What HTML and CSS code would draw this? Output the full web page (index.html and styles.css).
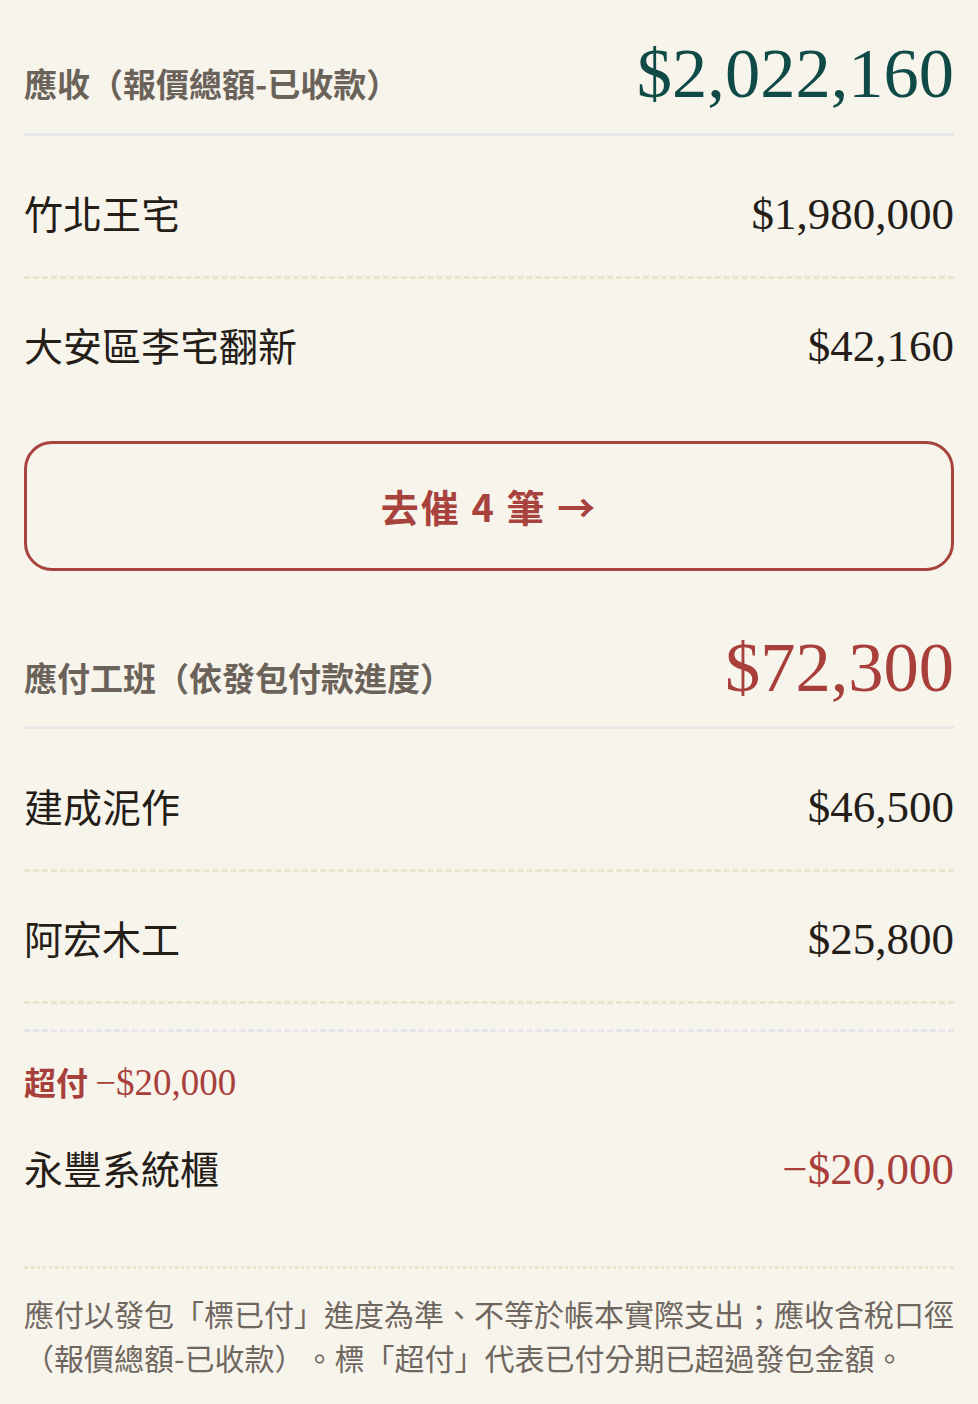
FILE: index.html
```html
<!DOCTYPE html>
<html lang="zh-Hant">
  <head>
    <meta charset="UTF-8" />
    <title>應收應付摘要</title>
    <link rel="stylesheet" href="styles.css">
  </head>
  <body>
    <main class="summary">
      <!-- 應收：依案場列出 -->
      <section class="block">
        <div class="block-head">
          <h2 class="block-title">應收（報價總額-已收款）</h2>
          <span class="block-total total-in">$2,022,160</span>
        </div>
        <ul class="rows">
          <li class="row">
            <span class="row-name">竹北王宅</span>
            <span class="row-amt">$1,980,000</span>
          </li>
          <li class="row is-last">
            <span class="row-name">大安區李宅翻新</span>
            <span class="row-amt">$42,160</span>
          </li>
        </ul>
        <button class="chase-btn" type="button">去催 4 筆 →</button>
      </section>

      <!-- 應付：依工班列出 -->
      <section class="block">
        <div class="block-head">
          <h2 class="block-title">應付工班（依發包付款進度）</h2>
          <span class="block-total total-out">$72,300</span>
        </div>
        <ul class="rows">
          <li class="row">
            <span class="row-name">建成泥作</span>
            <span class="row-amt">$46,500</span>
          </li>
          <li class="row">
            <span class="row-name">阿宏木工</span>
            <span class="row-amt">$25,800</span>
          </li>
        </ul>
        <div class="overpaid">
          <p class="overpaid-tag"><strong>超付</strong> <span class="overpaid-amt">−$20,000</span></p>
          <div class="row is-last">
            <span class="row-name">永豐系統櫃</span>
            <span class="row-amt neg">−$20,000</span>
          </div>
        </div>
      </section>

      <p class="note">應付以發包「標已付」進度為準、不等於帳本實際支出；應收含稅口徑（報價總額-已收款）。標「超付」代表已付分期已超過發包金額。</p>
    </main>
  </body>
</html>
```

FILE: styles.css
```css
/* 摘要頁：米色底、襯線金額 */
body {
  margin: 0;
  padding: 0 24px;
  background-color: #f7f4ec;
  color: #241d18;
  font-family: "Noto Sans CJK TC", "Noto Sans", sans-serif;
  text-spacing-trim: space-all;
}
.block + .block {
  margin-top: 23px;
}
.block-head {
  display: flex;
  justify-content: space-between;
  align-items: baseline;
  padding: 38px 0 24px;
  border-bottom: 3px solid #e6e7e7;
}
.block-title {
  margin: 0;
  font-size: 33px;
  font-weight: 700;
  line-height: 1;
  color: #6b635a;
}
.block-total {
  font-family: "Liberation Serif", serif;
  font-size: 70.5px;
  line-height: 1;
}
.total-in {
  color: #0f4a46;
}
.total-out {
  color: #a83f3a;
}
.rows {
  list-style: none;
  margin: 0;
  padding: 11px 0 0;
}
.row {
  display: flex;
  justify-content: space-between;
  align-items: baseline;
  padding: 42px 0 39px;
  line-height: 46px;
  border-bottom: 3px dashed #ebe5ce;
}
.row.is-last {
  border-bottom: none;
  padding-bottom: 40px;
}
.row-name {
  font-size: 39px;
}
.row-amt {
  font-family: "Liberation Serif", serif;
  font-size: 45px;
}
.row-amt.neg {
  color: #a83f3a;
}
.chase-btn {
  display: block;
  width: 100%;
  height: 130px;
  margin-top: 32px;
  border: 3px solid #a8423c;
  border-radius: 28px;
  background: transparent;
  color: #a8423c;
  font-family: "Noto Sans CJK TC", "Noto Sans", sans-serif;
  font-size: 38px;
  font-weight: 700;
  letter-spacing: 2px;
  cursor: pointer;
}
.overpaid {
  margin-top: 25px;
  padding-top: 27px;
  border-top: 3px dashed #e4e6e7;
}
.overpaid-tag {
  margin: 0;
  font-size: 32px;
  line-height: 44px;
  color: #a83f3a;
}
.overpaid-amt {
  font-family: "Liberation Serif", serif;
  font-size: 37px;
}
.overpaid .row {
  padding-top: 39px;
}
.note {
  margin: 34px 0 0;
  padding-top: 22px;
  border-top: 3px dotted #e9e3ca;
  font-size: 30px;
  line-height: 44px;
  color: #6f675f;
}
```
